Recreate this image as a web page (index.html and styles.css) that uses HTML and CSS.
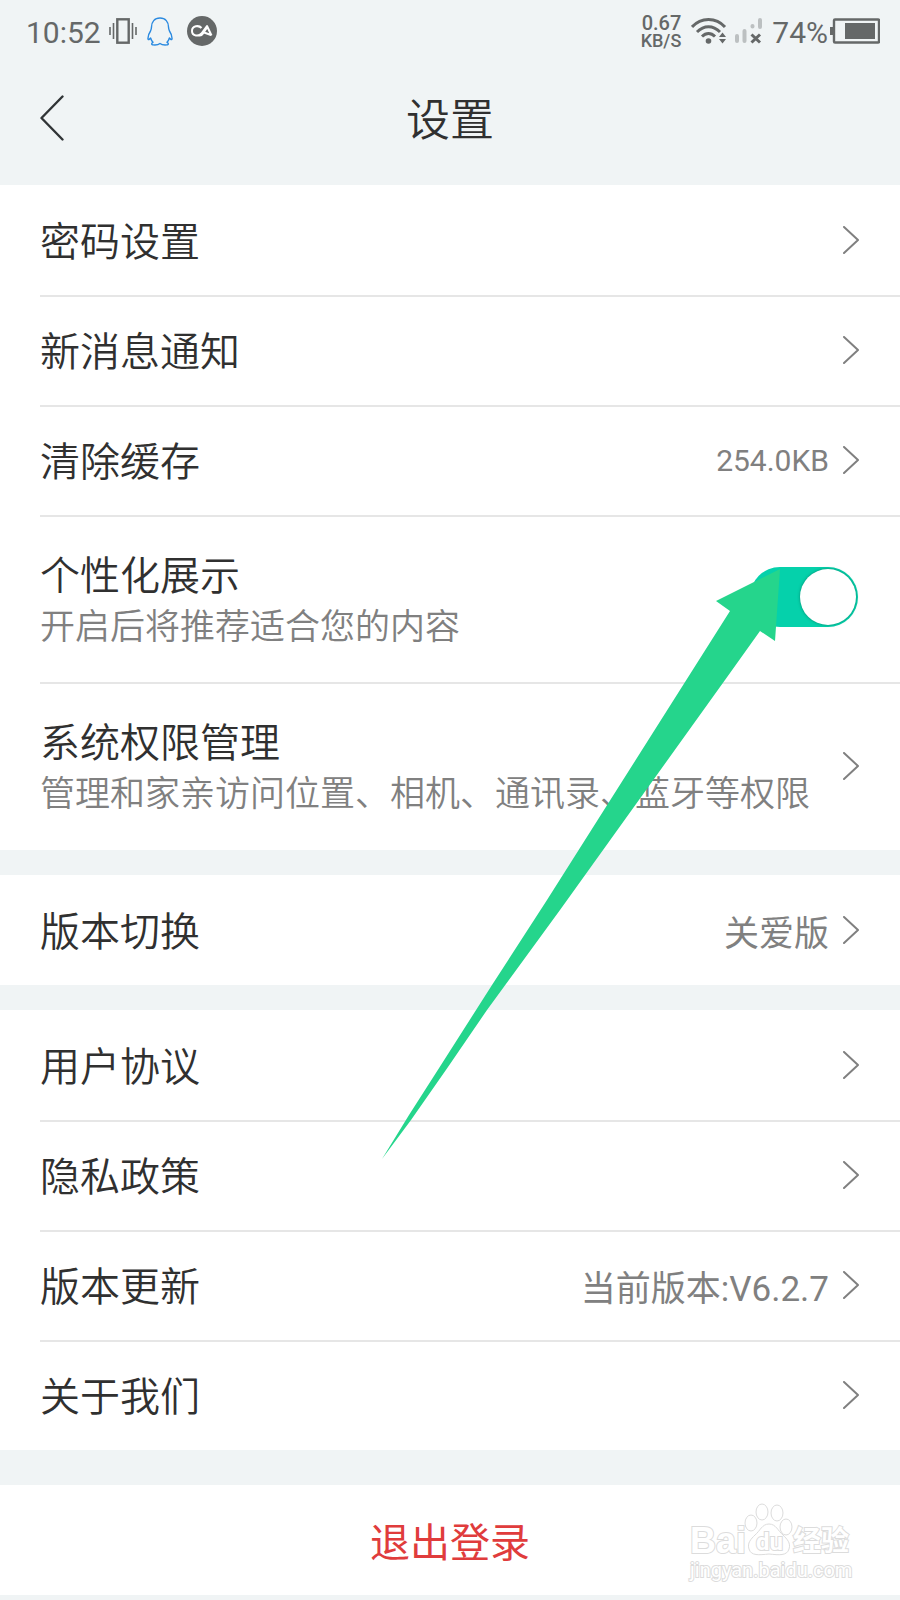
FILE: index.html
```
<!DOCTYPE html>
<html lang="zh-CN">
<head>
    <meta charset="UTF-8">
    <meta name="viewport" content="width=device-width, initial-scale=1.0">
    <title>设置</title>
    <link rel="stylesheet" href="styles.css">
</head>
<body>
    <div class="status-bar">
        <span class="time">10:52</span>
        <svg class="icon-vibrate" width="28" height="26" viewBox="0 0 28 26" fill="none" stroke="#656868">
            <rect x="8.300" y="1.300" width="11.400" height="23.400" stroke-width="2.400"/>
            <path d="M1 9v8M4.500 5v16M23.500 5v16M27 9v8" stroke-width="1.600"/>
        </svg>
        <svg class="icon-qq" width="26" height="29" viewBox="0 0 26 29" fill="none" stroke="#2b8ae0" stroke-width="1.400" stroke-linejoin="round">
            <path d="M13 1C7.500 1 4.500 5 4.500 10c0 2-.5 3-1.200 4.500C1.500 17 .8 19 1 22c.2 1.200 1.500.5 2.600-1 .5 1.800 1.300 3.200 2.400 4.300-1.500.6-2 2.500 0 2.600 2.500.3 5.200.1 7-1.500 1.800 1.600 4.500 1.800 7 1.500 2-.1 1.500-2 0-2.600 1.100-1.100 1.900-2.500 2.400-4.300 1.100 1.500 2.400 2.200 2.600 1 .2-3-.5-5-2.300-7.500-.7-1.500-1.200-2.500-1.200-4.500 0-5-3-9-8.500-9z"/>
        </svg>
        <svg class="icon-app" width="30" height="30" viewBox="0 0 30 30">
            <circle cx="15" cy="15" r="15" fill="#656868"/>
            <path d="M14.500 12C12 9 5 9.500 5 15s7 5.500 9.500 2.500L20 10l4.500 9.500M12 19.500c2 .5 3-.5 4-2l4-6M17 16.500l7 2.500" fill="none" stroke="#fff" stroke-width="2" stroke-linejoin="round"/>
        </svg>
        <div class="net-speed"><b>0.67</b><span>KB/S</span></div>
        <svg class="icon-wifi" width="36" height="26" viewBox="0 0 36 26" fill="none" stroke="#656868" stroke-width="3">
            <path d="M1 9C10-1 25-1 34 9M6 14C13 7 22 7 29 14M11 18.500C15 14.500 20 14.500 24 18.500"/>
            <circle cx="17.500" cy="23" r="2.800" fill="#656868" stroke="none"/>
            <path d="M28 19l3.500-4.500L35 19zM28 21l3.500 4.500L35 21z" fill="#656868" stroke="none"/>
        </svg>
        <svg class="icon-signal" width="28" height="27" viewBox="0 0 28 27" fill="none" stroke="#bcc0c1" stroke-width="4" stroke-linecap="round">
            <path d="M2 18v5M9.500 13v10M17.500 8v.5M25 2v7"/>
            <path d="M16.500 16.500l8.500 8M25 16.500l-8.500 8" stroke="#656868" stroke-width="3" stroke-linecap="butt"/>
        </svg>
        <span class="percent">74%</span>
        <svg class="icon-battery" width="50" height="26" viewBox="0 0 50 26">
            <rect x="4" y="1.500" width="45" height="23" rx="1" fill="none" stroke="#656868" stroke-width="2.400"/>
            <rect x="0" y="9" width="4" height="8" fill="#656868"/>
            <rect x="15" y="5" width="30" height="16" fill="#656868"/>
        </svg>
    </div>

    <header class="nav">
        <button class="back-btn" type="button" aria-label="返回">
            <svg width="24" height="46" viewBox="0 0 24 46" fill="none" stroke="#303436" stroke-width="2.400" stroke-linecap="round" stroke-linejoin="round">
                <path d="M22.500 1.500L1.500 23l21 21.500"/>
            </svg>
        </button>
        <h1>设置</h1>
    </header>

    <main>
        <ul class="group">
            <li><a class="row" href="#password"><span class="title">密码设置</span><svg class="chevron" viewBox="0 0 16 28"><path d="M1 1l14 13L1 27"/></svg></a></li>
            <li><a class="row" href="#notice"><span class="title">新消息通知</span><svg class="chevron" viewBox="0 0 16 28"><path d="M1 1l14 13L1 27"/></svg></a></li>
            <li><a class="row" href="#cache"><span class="title">清除缓存</span><span class="value size">254.0KB</span><svg class="chevron" viewBox="0 0 16 28"><path d="M1 1l14 13L1 27"/></svg></a></li>
            <li>
                <label class="row tall" for="personal">
                    <span class="text"><span class="title">个性化展示</span><span class="desc">开启后将推荐适合您的内容</span></span>
                    <input class="switch" type="checkbox" role="switch" id="personal" checked>
                </label>
            </li>
            <li>
                <a class="row tall" href="#permission">
                    <span class="text"><span class="title">系统权限管理</span><span class="desc">管理和家亲访问位置、相机、通讯录、蓝牙等权限</span></span>
                    <svg class="chevron" viewBox="0 0 16 28"><path d="M1 1l14 13L1 27"/></svg>
                </a>
            </li>
        </ul>

        <ul class="group">
            <li><a class="row" href="#edition"><span class="title">版本切换</span><span class="value">关爱版</span><svg class="chevron" viewBox="0 0 16 28"><path d="M1 1l14 13L1 27"/></svg></a></li>
        </ul>

        <ul class="group">
            <li><a class="row" href="#agreement"><span class="title">用户协议</span><svg class="chevron" viewBox="0 0 16 28"><path d="M1 1l14 13L1 27"/></svg></a></li>
            <li><a class="row" href="#privacy"><span class="title">隐私政策</span><svg class="chevron" viewBox="0 0 16 28"><path d="M1 1l14 13L1 27"/></svg></a></li>
            <li><a class="row" href="#update"><span class="title">版本更新</span><span class="value">当前版本:V6.2.7</span><svg class="chevron" viewBox="0 0 16 28"><path d="M1 1l14 13L1 27"/></svg></a></li>
            <li><a class="row" href="#about"><span class="title">关于我们</span><svg class="chevron" viewBox="0 0 16 28"><path d="M1 1l14 13L1 27"/></svg></a></li>
        </ul>
    </main>

    <div class="logout">
        <button class="logout-btn" type="button">退出登录</button>
        <!-- Watermark -->
        <svg class="watermark" width="170" height="84" viewBox="0 0 170 84" aria-hidden="true">
            <g fill="#fff" stroke="#dcdcdc" stroke-width="1">
                <path d="M83 23c-7 0-9 7-14 11-4 4-8 8-6 14 2 7 10 6 20 5 10 1 18 2 20-5 2-6-2-10-6-14-5-4-7-11-14-11z"/>
                <ellipse cx="65" cy="22" rx="6" ry="8"/>
                <ellipse cx="76" cy="11" rx="6" ry="8"/>
                <ellipse cx="91" cy="12" rx="6" ry="8"/>
                <ellipse cx="100" cy="26" rx="6" ry="8"/>
            </g>
            <text class="wm-logo" x="4" y="52">Bai</text>
            <text class="wm-du" x="70" y="49">du</text>
            <text class="wm-cn" x="107" y="50">经验</text>
            <text class="wm-url" x="4" y="76">jingyan.baidu.com</text>
        </svg>
    </div>

    <!-- Pointer to the switch -->
    <svg class="pointer" width="400" height="592" viewBox="0 0 400 592" aria-hidden="true">
        <path d="M399 0L335 32l14 10L166 331 111 416 60 496 28 546 1 590 30 551 67 498 106 441 179 341 344 111 379 62l15 10z" fill="#25d58c"/>
    </svg>
</body>
</html>
```

FILE: styles.css
```
* {
    box-sizing: border-box;
}
body {
    position: relative;
    margin: 0;
    background-color: #f0f4f5;
    color: #303030;
    font-family: Roboto, "Noto Sans CJK SC", sans-serif;
}
.status-bar {
    display: flex;
    align-items: center;
    height: 62px;
    padding: 0 20px 0 26px;
    color: #656868;
    font-size: 30px;
}
.time, .percent {
    padding-top: 2px;
}
.icon-vibrate {
    margin-left: 8px;
}
.icon-qq {
    margin-left: 10px;
}
.icon-app {
    margin-left: 14px;
}
.net-speed {
    display: flex;
    flex-direction: column;
    align-items: flex-end;
    margin-left: auto;
    font-size: 18px;
    font-weight: 500;
    line-height: 16px;
}
.net-speed b {
    font-size: 20px;
    font-weight: 500;
    line-height: 19px;
}
.icon-wifi {
    margin-left: 10px;
}
.icon-signal {
    margin-left: 8px;
}
.percent {
    margin-left: 9px;
}
.icon-battery {
    margin-left: 2px;
}
.nav {
    display: grid;
    grid-template-columns: 64px 1fr 64px;
    align-items: center;
    height: 123px;
    padding-bottom: 12px;
}
.nav h1 {
    margin: 0;
    padding-top: 6px;
    font-size: 44px;
    font-weight: 350;
    line-height: 64px;
    text-align: center;
}
.back-btn {
    display: flex;
    justify-content: flex-end;
    padding: 0;
    border: none;
    background: none;
    cursor: pointer;
}
.group {
    margin: 0 0 25px;
    padding: 0 0 0 40px;
    background-color: white;
    list-style: none;
}
.group li + li {
    box-shadow: inset 0 2px 0 #e6e6e6;
}
.row {
    display: flex;
    align-items: center;
    min-height: 110px;
    padding-right: 41px;
    color: inherit;
    font-weight: 350;
    text-decoration: none;
    cursor: pointer;
}
.tall {
    min-height: 167px;
}
li:last-child .tall {
    min-height: 168px;
}
.text {
    display: flex;
    flex-direction: column;
}
.title {
    padding-top: 6px;
    font-size: 40px;
    line-height: 52px;
}
.desc {
    color: #808080;
    font-size: 35px;
    line-height: 50px;
}
.value {
    margin-left: auto;
    color: #808080;
    font-size: 35px;
    font-weight: 400;
}
.size {
    font-size: 30px;
}
.chevron {
    flex: none;
    width: 16px;
    height: 28px;
    margin-left: auto;
    fill: none;
    stroke: #808080;
    stroke-width: 2;
    stroke-linecap: round;
    stroke-linejoin: round;
}
.value + .chevron {
    margin-left: 14px;
}
.switch {
    display: flex;
    align-items: center;
    justify-content: flex-end;
    width: 108px;
    height: 60px;
    margin: 0 1px 4px auto;
    padding: 2px;
    border-radius: 30px;
    background-color: #05d1ab;
    appearance: none;
    cursor: pointer;
}
.switch::before {
    content: "";
    width: 56px;
    height: 56px;
    border-radius: 50%;
    background-color: white;
    box-shadow: 0 0 3px rgba(0, 90, 70, 0.6);
}
.switch:not(:checked) {
    justify-content: flex-start;
    background-color: #ccc;
}
.logout {
    position: relative;
    margin: 35px 0 5px;
    background-color: white;
}
.logout-btn {
    display: block;
    width: 100%;
    height: 110px;
    padding: 0;
    border: none;
    background: none;
    color: #e03c3c;
    font-family: inherit;
    font-size: 40px;
    cursor: pointer;
}
.watermark {
    position: absolute;
    right: 44px;
    bottom: 10px;
    pointer-events: none;
}
.watermark text {
    fill: white;
    stroke: #dcdcdc;
    stroke-width: 2;
    paint-order: stroke;
    font-weight: 700;
}
.watermark .wm-logo {
    font-family: "Liberation Sans", sans-serif;
    font-size: 36px;
}
.watermark .wm-du {
    font-size: 24px;
}
.watermark .wm-cn {
    font-size: 28px;
}
.watermark .wm-url {
    font-size: 20px;
    font-weight: 400;
}
.pointer {
    position: absolute;
    top: 569px;
    right: 119px;
    pointer-events: none;
}
```
